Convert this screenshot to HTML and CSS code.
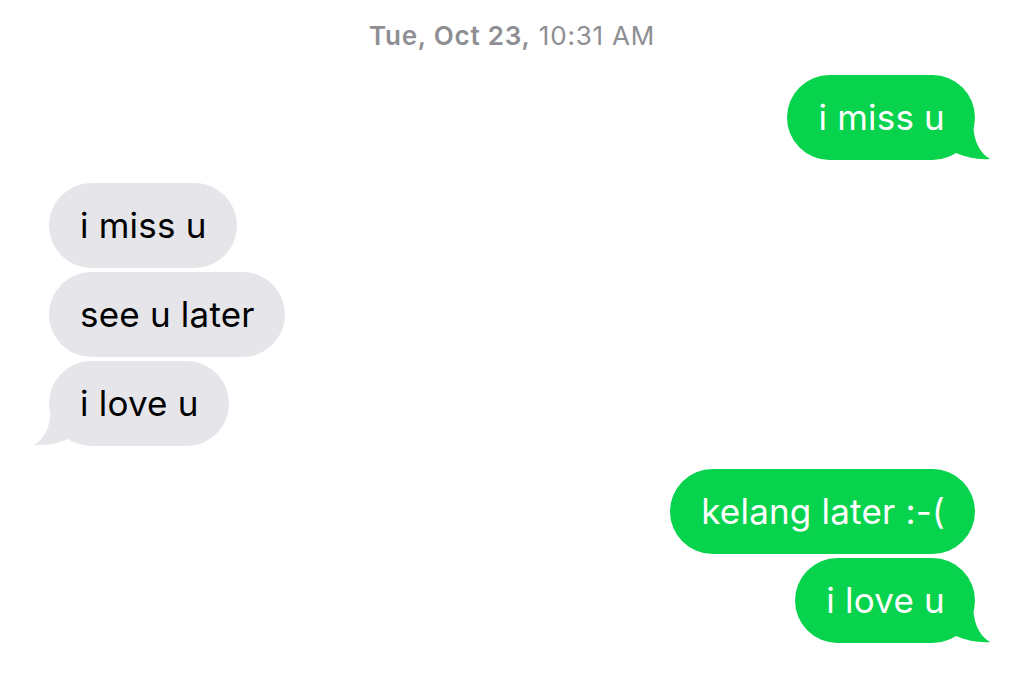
FILE: index.html
```html
<!DOCTYPE html>
<html>
<head>
<meta charset="utf-8">
<link rel="stylesheet" href="styles.css">
</head>
<body>
<div class="chat">
  <div class="stamp"><b>Tue, Oct 23,</b> 10:31 AM</div>
  <div class="group sent">
    <div class="bubble green">i miss u
      <svg class="tail-r" viewBox="0 0 40 40" width="40" height="40"><path d="M0,0 H23 C23,18 28,32 40,39 C30,40 18,38 6,33 L0,36 Z"/></svg>
    </div>
  </div>
  <div class="group recv">
    <div class="bubble gray">i miss u</div>
    <div class="bubble gray">see u later</div>
    <div class="bubble gray">i love u
      <svg class="tail-l" viewBox="0 0 40 40" width="40" height="40"><path d="M40,0 H17 C17,18 12,32 0,39 C10,40 22,38 34,33 L40,36 Z"/></svg>
    </div>
  </div>
  <div class="group sent">
    <div class="bubble green">kelang later :-(</div>
    <div class="bubble green">i love u
      <svg class="tail-r" viewBox="0 0 40 40" width="40" height="40"><path d="M0,0 H23 C23,18 28,32 40,39 C30,40 18,38 6,33 L0,36 Z"/></svg>
    </div>
  </div>
</div>
</body>
</html>
```
FILE: styles.css
```css
html, body {
  margin: 0;
  padding: 0;
  background: #ffffff;
}
.chat {
  font-family: Inter, "Noto Sans", sans-serif;
  padding: 20px 49px 0 49px;
  display: flex;
  flex-direction: column;
  gap: 23px;
}
.stamp {
  text-align: center;
  color: #8e8e93;
  font-size: 26px;
  line-height: 32px;
  letter-spacing: 0.8px;
}
.stamp b {
  font-weight: 600;
}
.group {
  display: flex;
  flex-direction: column;
  gap: 4px;
}
.sent {
  align-items: flex-end;
}
.recv {
  align-items: flex-start;
}
.bubble {
  position: relative;
  font-size: 35px;
  line-height: 41px;
  letter-spacing: 0.2px;
  padding: 22px 30px 22px 31px;
  border-radius: 43px;
}
.green {
  background: #08d34d;
  color: #ffffff;
}
.gray {
  background: #e5e5ea;
  color: #000000;
}
.tail-r {
  position: absolute;
  right: -15px;
  bottom: 0;
  fill: #08d34d;
}
.tail-l {
  position: absolute;
  left: -15px;
  bottom: 0;
  fill: #e5e5ea;
}
```
